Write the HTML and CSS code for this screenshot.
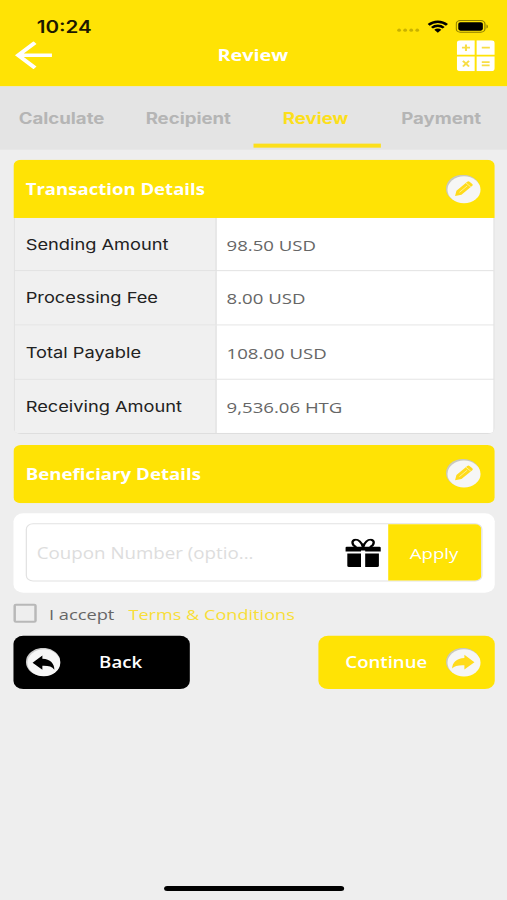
FILE: index.html
```html
<!DOCTYPE html>
<html lang="en">
<head>
<meta charset="utf-8">
<title>Review</title>
<link rel="stylesheet" href="styles.css">
</head>
<body>
<div class="screen">
  <header class="top">
    <div class="status">
      <span class="time">10:24</span>
      <span class="signals">
        <svg class="dots" width="19" height="4" viewBox="0 0 20 4"><g fill="#c9b200"><circle cx="2" cy="2" r="1.6"/><circle cx="7.2" cy="2" r="1.6"/><circle cx="12.4" cy="2" r="1.6"/><circle cx="17.6" cy="2" r="1.6"/></g></svg>
        <svg class="wifi" width="17" height="13" viewBox="0 0 17 13"><path d="M1 4.8C5.2.6 11.8.6 16 4.8M3.7 7.6c2.7-2.6 6.9-2.6 9.6 0" fill="none" stroke="#000" stroke-width="2.3"/><path d="M5.6 9.6c1.7-1.5 4.1-1.5 5.8 0L8.5 12.6z"/></svg>
        <svg class="battery" width="27" height="13" viewBox="0 0 27 13"><rect x=".5" y=".5" width="23.5" height="11.6" rx="3.4" fill="none" stroke="#8d7e00"/><rect x="2.2" y="2.1" width="20.1" height="8.4" rx="1.8"/><path d="M25.2 4.3c1.6.6 1.6 3.4 0 4z" fill="#8d7e00"/></svg>
      </span>
    </div>
    <div class="nav">
      <svg width="31" height="28" viewBox="0 0 31 28"><path d="M16.6 1.5L2.9 14l13.7 12.5M2.9 14H30.4" fill="none" stroke="#fff" stroke-width="3.6"/></svg>
      <h1 class="title">Review</h1>
      <svg width="31" height="31" viewBox="0 0 31 31"><path d="M3 0h11.6v14.6H0V3a3 3 0 0 1 3-3zM16.2 0H28a3 3 0 0 1 3 3v11.6H16.2zM0 16.2h14.6V31H3a3 3 0 0 1-3-3zM16.2 16.2H31V28a3 3 0 0 1-3 3H16.2z" fill="#fff"/><path d="M4.2 7.5h6.6M7.5 4.2v6.6M20.4 7.5h6.6M20.4 21.8h6.4M20.4 25h6.4M5 20.6l5 5.6M10 20.6l-5 5.6" stroke="#f7dd45" stroke-width="1.7" fill="none"/></svg>
    </div>
  </header>
  <nav class="tabs">
    <span class="tab">Calculate</span>
    <span class="tab">Recipient</span>
    <span class="tab active">Review</span>
    <span class="tab last">Payment</span>
  </nav>
  <main class="content">
    <section class="card">
      <div class="card-head">
        <h2 class="card-title">Transaction Details</h2>
        <svg class="disc" width="29" height="29" viewBox="0 0 29 29"><circle cx="14" cy="13.8" r="13.8" fill="#c9c9bd"/><circle cx="14.9" cy="14.9" r="13.5" fill="#f6f6f6"/><g transform="translate(14.3 14.3) rotate(-45)"><path d="M-9.5 0l4.5-2.9H7.5q1.3 0 1.3 1.3V1.6q0 1.3-1.3 1.3H-5z" fill="#ffdb1c"/><path d="M-4.5 0H4.5M5.9-2.9v5.8" stroke="#fff3a0" stroke-width=".7"/></g></svg>
      </div>
      <dl class="rows">
        <div class="row"><dt>Sending Amount</dt><dd>98.50 USD</dd></div>
        <div class="row"><dt>Processing Fee</dt><dd>8.00 USD</dd></div>
        <div class="row"><dt>Total Payable</dt><dd>108.00 USD</dd></div>
        <div class="row"><dt>Receiving Amount</dt><dd>9,536.06 HTG</dd></div>
      </dl>
    </section>
    <section class="card second">
      <div class="card-head">
        <h2 class="card-title">Beneficiary Details</h2>
        <svg class="disc" width="29" height="29" viewBox="0 0 29 29"><circle cx="14" cy="13.8" r="13.8" fill="#c9c9bd"/><circle cx="14.9" cy="14.9" r="13.5" fill="#f6f6f6"/><g transform="translate(14.3 14.3) rotate(-45)"><path d="M-9.5 0l4.5-2.9H7.5q1.3 0 1.3 1.3V1.6q0 1.3-1.3 1.3H-5z" fill="#ffdb1c"/><path d="M-4.5 0H4.5M5.9-2.9v5.8" stroke="#fff3a0" stroke-width=".7"/></g></svg>
      </div>
    </section>
    <section class="coupon">
      <div class="field">
        <span class="placeholder">Coupon Number (optio...</span>
        <svg width="29" height="29" viewBox="0 0 29 29"><path d="M0 9.4q0-1.2 1.2-1.2h26.6q1.2 0 1.2 1.2V13H16.2v-1h-3.4v1H0zM1.6 15h11.2v13.6H3q-1.4 0-1.4-1.4zM16.2 15h11.2v12.2q0 1.4-1.4 1.4h-9.8z"/><path d="M14.5 8.8C13.5 3.6 10.3.9 8 1.3 4.9 1.9 5 6.8 9 8.6M14.5 8.8c1-5.2 4.2-7.9 6.5-7.5 3.1.6 3 5.5-1 7.3" fill="none" stroke="#000" stroke-width="1.9"/></svg>
        <button class="apply">Apply</button>
      </div>
    </section>
    <div class="terms">
      <span class="checkbox"></span>
      <span class="accept">I accept</span>
      <a class="link">Terms &amp; Conditions</a>
    </div>
    <div class="actions">
      <button class="btn back">
        <svg width="29" height="29" viewBox="0 0 29 29"><circle cx="14.2" cy="14" r="14" fill="#ccc"/><circle cx="14.8" cy="14.8" r="13.4" fill="#f7f7f7"/><path d="M5.6 14.8L13.6 7.6v3.2c6.6.3 9.8 4.9 9.8 11-2-3.2-5-4.1-9.800-3.900v4z" fill="#000"/></svg>
        <span class="back-label">Back</span>
      </button>
      <button class="btn next">
        <span>Continue</span>
        <svg class="disc" width="29" height="29" viewBox="0 0 29 29"><circle cx="14" cy="13.8" r="13.8" fill="#c9c9bd"/><circle cx="14.9" cy="14.9" r="13.5" fill="#f6f6f6"/><path d="M23.4 14.2L15.2 6.8v3.3C8.6 10.4 5.3 15 5.2 20.6c2-2.9 5-3.500 10-3.300v4.300z" fill="#ffdb1c"/></svg>
      </button>
    </div>
  </main>
  <div class="home"></div>
</div>
</body>
</html>
```
FILE: styles.css
```css
* { box-sizing: border-box; margin: 0; padding: 0; }
html, body { width: 507px; height: 900px; overflow: hidden; background: #eee; }
svg { display: block; flex: none; }
button { border: 0; background: none; font: inherit; color: inherit; }

/* 414x896 layout stretched over the window */
.screen {
  width: 414px;
  height: 896px;
  display: flex;
  flex-direction: column;
  transform: scale(1.22464, 1.00446);
  transform-origin: 0 0;
  background: #eee;
  font-family: "Open Sans", sans-serif;
  font-size: 15.2px;
}

.top { height: 86px; background: #ffe305; }
.status {
  height: 40px;
  padding: 13px 15px 0 30px;
  display: flex;
  justify-content: space-between;
  align-items: flex-start;
}
.time { font: 600 16.8px/28px Inter, sans-serif; color: #1c1900; }
.signals { display: flex; align-items: center; height: 26px; }
.dots { margin: 8px 6px 0 0; }
.wifi { margin-right: 6px; }
.nav {
  height: 30px;
  padding: 0 10px 0 12px;
  display: flex;
  justify-content: space-between;
  align-items: center;
}
.title { font-size: 16.2px; font-weight: 700; color: #fff; line-height: 24px; margin-right: 3px; }

.tabs { height: 63px; display: grid; grid-template-columns: repeat(4, 1fr); background: #e4e4e4; }
.tab {
  font: 700 15.2px/63px Inter, sans-serif;
  text-align: center;
  padding-right: 3px;
  color: #b5b5b5;
}
.tab.active { color: #fcdf1b; border-bottom: 4px solid #fcdf1b; height: 61px; padding-right: 2px; }
.tab.last { padding-right: 4px; }

.content { flex: 1; padding: 10px 10.5px 0 11px; }
.card { border-radius: 6px; overflow: hidden; }
.card-head {
  height: 58px;
  padding: 0 10px;
  display: flex;
  justify-content: space-between;
  align-items: center;
  background: #ffe305;
}
.card-title { font-size: 15.15px; font-weight: 700; color: #fff; }
.second .card-title { font-size: 15.25px; }
.disc { margin-right: 0.4px; }
.rows { border: 1px solid #ddd; border-top: 0; border-radius: 0 0 4px 4px; overflow: hidden; }
.row {
  display: grid;
  grid-template-columns: 165px 1fr;
  grid-template-rows: 100%;
  height: 54px;
  line-height: 54px;
  border-bottom: 1px solid #ddd;
}
.row:first-child { height: 53px; }
.row:last-child { border-bottom: 0; height: 53px; }
dt, dd { overflow: hidden; }
dt { font-family: Inter, sans-serif; font-size: 14.9px; padding-left: 9px; color: #222; background: #f0f0f0; border-right: 1px solid #ddd; }
dd { padding-left: 8px; color: #666; background: #fff; }
.second { margin-top: 10.5px; }

.coupon { margin-top: 10.5px; height: 78.5px; padding: 10px; background: #fff; border-radius: 8px; }
.field {
  height: 58px;
  display: flex;
  align-items: center;
  border: 1px solid #e2e2e2;
  border-radius: 6px;
  overflow: hidden;
}
.placeholder { flex: 1; padding: 1px 0 0 8px; font-size: 15.3px; color: #ddd; white-space: nowrap; }
.apply { width: 76px; height: 58px; padding-top: 1px; margin-left: 6px; background: #ffe305; color: #fff; }

.terms { margin-top: 9px; height: 24px; display: flex; align-items: center; font-size: 14.9px; color: #666; }
.checkbox { width: 19px; height: 19px; border: 2px solid #b8b8b8; border-radius: 2px; }
.accept { margin-left: 10px; }
.link { margin-left: 11.5px; font-size: 14.8px; color: #f8de38; }

.actions { margin-top: 10px; display: flex; justify-content: space-between; }
.btn {
  width: 144px;
  height: 53px;
  padding: 0 10px;
  display: flex;
  align-items: center;
  justify-content: space-between;
  border-radius: 8px;
  color: #fff;
  font-weight: 600;
}
.back { background: #000; }
.back-label { margin-right: 29px; }
.next { background: #ffe305; padding-left: 22.5px; }

.home { width: 147px; height: 5px; margin: 0 auto 9px; border-radius: 3px; background: #000; }
```
